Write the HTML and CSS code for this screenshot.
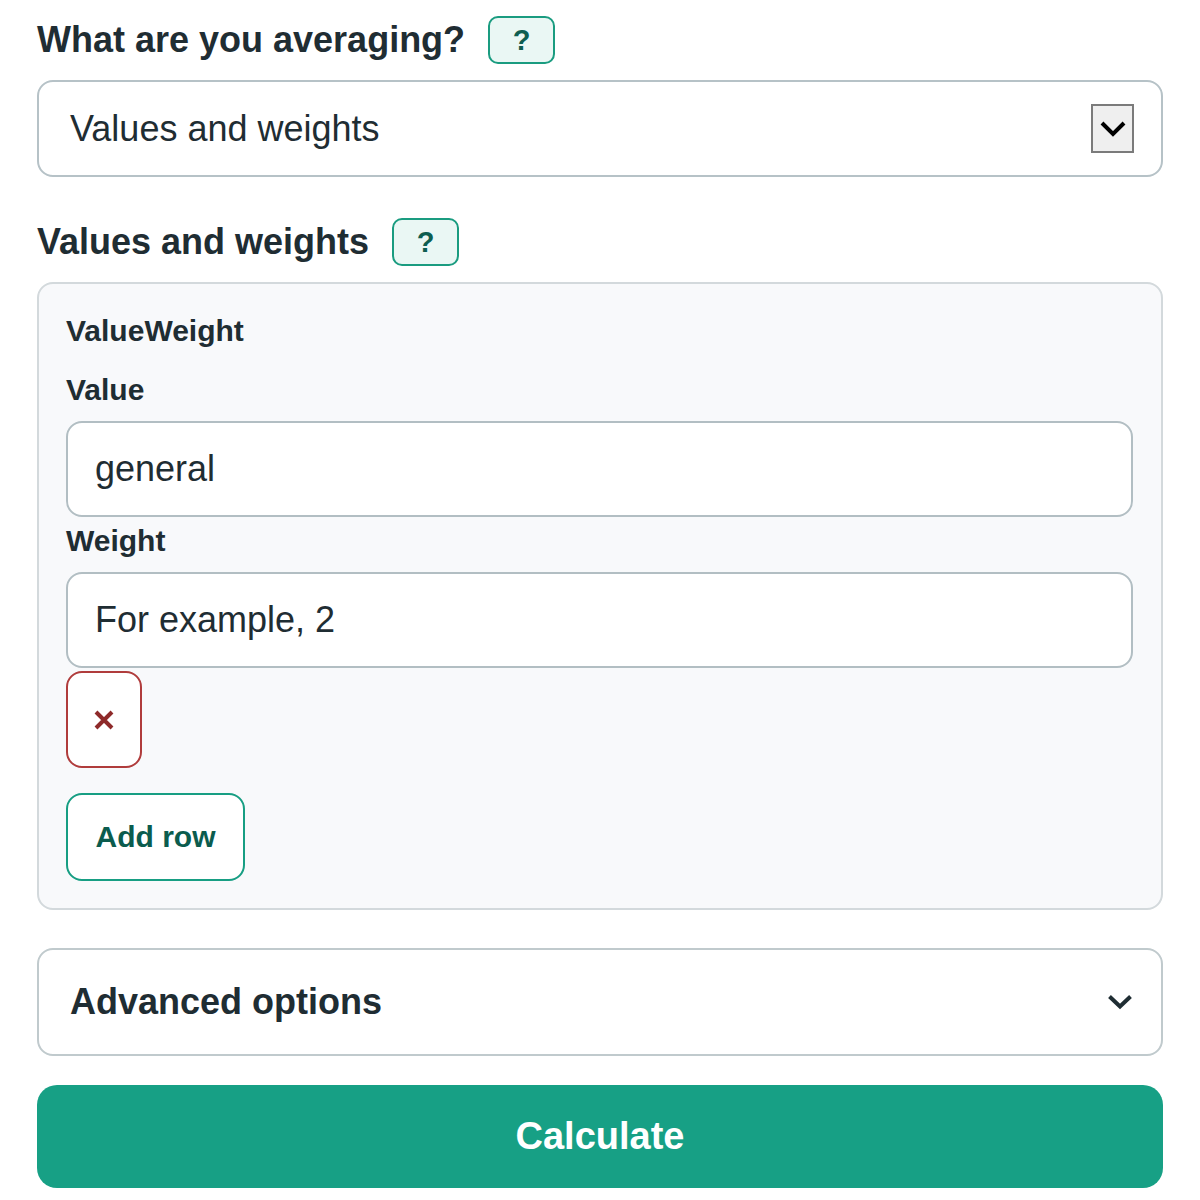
FILE: index.html
```html
<!DOCTYPE html>
<html lang="en">
<head>
<meta charset="utf-8">
<title>Weighted average</title>
<link rel="stylesheet" href="styles.css">
</head>
<body>
<main class="page">
  <div class="heading-row first">
    <h2 class="heading">What are you averaging?</h2>
    <button class="help" type="button">?</button>
  </div>
  <div class="select">
    <span class="select-text">Values and weights</span>
    <span class="select-btn">
      <svg width="28" height="18" viewBox="0 0 28 18"><path d="M3 3 L14 14 L25 3" fill="none" stroke="#000" stroke-width="4"/></svg>
    </span>
  </div>

  <div class="heading-row second">
    <h2 class="heading">Values and weights</h2>
    <button class="help" type="button">?</button>
  </div>
  <section class="fieldset">
    <div class="label group-label">ValueWeight</div>
    <div class="label value-label">Value</div>
    <div class="input"><span class="input-text">general</span></div>
    <div class="label weight-label">Weight</div>
    <div class="input"><span class="input-text">For example, 2</span></div>
    <button class="remove" type="button">
      <svg width="22" height="22" viewBox="0 0 22 22"><path d="M3 3 L19 19 M19 3 L3 19" fill="none" stroke="#8e2a2a" stroke-width="4"/></svg>
    </button>
    <button class="add" type="button">Add row</button>
  </section>

  <div class="advanced">
    <span class="advanced-text">Advanced options</span>
    <svg width="26" height="16" viewBox="0 0 26 16"><path d="M2.5 2.5 L13 12.5 L23.5 2.5" fill="none" stroke="#1f2d33" stroke-width="4"/></svg>
  </div>

  <button class="calculate" type="button">Calculate</button>
</main>
</body>
</html>
```

FILE: styles.css
```css
* { box-sizing: border-box; }

body {
  margin: 0;
  background: #ffffff;
  font-family: "Liberation Sans", Arial, sans-serif;
  color: #1f2d33;
}

.page {
  padding: 16px 37px 0 37px;
  display: flex;
  flex-direction: column;
}

.heading-row {
  display: flex;
  align-items: center;
  gap: 23px;
}

.heading-row.second {
  margin-top: 41px;
}

.heading {
  margin: 0;
  font-size: 36px;
  font-weight: 700;
  line-height: 40px;
  color: #1f2d33;
}

.help {
  width: 67px;
  height: 48px;
  border: 2px solid #1a9c80;
  border-radius: 10px;
  background: #eaf7f4;
  color: #0e5e50;
  font-family: "Liberation Sans", Arial, sans-serif;
  font-size: 29px;
  font-weight: 700;
  padding: 0;
  display: flex;
  align-items: center;
  justify-content: center;
}

.select {
  margin-top: 16px;
  height: 97px;
  border: 2px solid #b6c2c7;
  border-radius: 16px;
  background: #ffffff;
  display: flex;
  align-items: center;
  justify-content: space-between;
  padding: 0 27px 0 31px;
}

.select-text {
  font-size: 36px;
  color: #1f2d33;
}

.select-btn {
  width: 43px;
  height: 49px;
  background: #efefef;
  border: 2px solid #7b7b7b;
  display: flex;
  align-items: center;
  justify-content: center;
}

.fieldset {
  margin-top: 16px;
  background: #f8f9fb;
  border: 2px solid #d3d9dc;
  border-radius: 16px;
  padding: 29px 28px 27px 27px;
  display: flex;
  flex-direction: column;
  align-items: flex-start;
}

.label {
  font-size: 30px;
  font-weight: 700;
  line-height: 35px;
  color: #1f2d33;
}

.value-label { margin-top: 24px; margin-bottom: 14px; }
.weight-label { margin-top: 6px; margin-bottom: 14px; }

.input {
  width: 100%;
  height: 96px;
  background: #ffffff;
  border: 2px solid #b2bec3;
  border-radius: 16px;
  display: flex;
  align-items: center;
  padding: 0 27px;
}

.input-text {
  font-size: 36px;
  color: #1f2d33;
}

.remove {
  margin-top: 3px;
  width: 76px;
  height: 97px;
  border: 2px solid #b03c3c;
  border-radius: 16px;
  background: #ffffff;
  padding: 0;
  display: flex;
  align-items: center;
  justify-content: center;
}

.add {
  margin-top: 25px;
  width: 179px;
  height: 88px;
  border: 2px solid #179e83;
  border-radius: 16px;
  background: #ffffff;
  color: #0b5c4e;
  font-family: "Liberation Sans", Arial, sans-serif;
  font-size: 30px;
  font-weight: 700;
  padding: 0;
}

.advanced {
  margin-top: 38px;
  height: 108px;
  border: 2px solid #c0cacd;
  border-radius: 16px;
  background: #ffffff;
  display: flex;
  align-items: center;
  justify-content: space-between;
  padding: 0 28px 0 31px;
}

.advanced-text {
  font-size: 36px;
  font-weight: 700;
  color: #1f2d33;
}

.calculate {
  margin-top: 29px;
  height: 103px;
  border: none;
  border-radius: 20px;
  background: #17a085;
  color: #ffffff;
  font-family: "Liberation Sans", Arial, sans-serif;
  font-size: 38px;
  font-weight: 700;
}
```
